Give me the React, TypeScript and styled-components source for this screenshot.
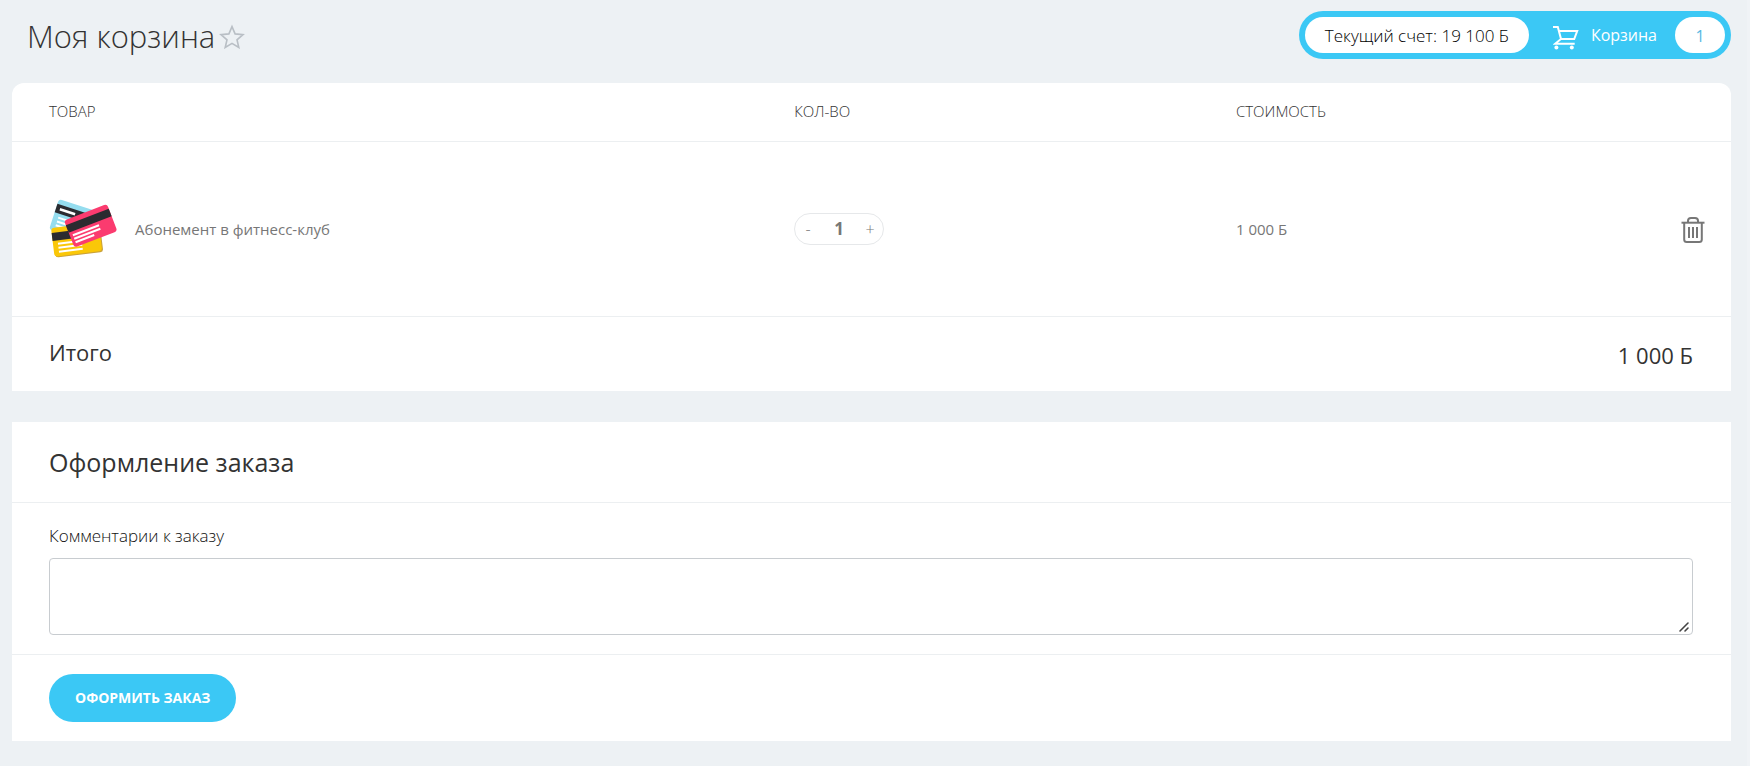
import React, { useState } from "react";
import styled, { createGlobalStyle } from "styled-components";

const GlobalStyle = createGlobalStyle`
  *, *::before, *::after { box-sizing: border-box; }
  body {
    margin: 0;
    background: #edf1f4;
    color: #333;
    font-family: "Open Sans", "Noto Sans", sans-serif;
    font-size: 16px;
  }
  button, input, textarea { font: inherit; color: inherit; }
`;

const Page = styled.div`
  min-height: 100vh;
  padding: 0 16px 25px 12px;
  border-right: 3px solid #f0f3f6;
`;

const Header = styled.header`
  display: flex;
  justify-content: space-between;
  align-items: flex-start;
  padding: 11px 0 22px 15px;
`;

const TitleGroup = styled.div`
  display: flex;
  align-items: center;
  gap: 4px;
`;

const Title = styled.h1`
  margin: 0;
  font-size: 31px;
  line-height: 50px;
  font-weight: 300;
`;

const IconButton = styled.button`
  display: inline-flex;
  padding: 0;
  border: 0;
  background: none;
  vertical-align: middle;
  cursor: pointer;
`;

const AccountBar = styled.div`
  display: flex;
  align-items: center;
  height: 48px;
  padding: 6px;
  border-radius: 24px;
  background: #3bc8f5;
`;

const Balance = styled.span`
  height: 36px;
  padding: 0 20px;
  border-radius: 18px;
  background: #fff;
  color: #000;
  font-size: 17px;
  font-weight: 300;
  line-height: 38px;
`;

const CartLink = styled.a`
  display: flex;
  align-items: center;
  height: 36px;
  margin-left: 24px;
  color: #fff;
  line-height: 38px;
  text-decoration: none;

  svg { margin-right: 12px; }
`;

const CartCount = styled.span`
  min-width: 50px;
  height: 36px;
  margin-left: 18px;
  border-radius: 18px;
  background: #fff;
  color: #55b9e3;
  text-align: center;
`;

const Card = styled.section<{ $rounded?: boolean }>`
  border-radius: ${(p) => (p.$rounded ? "12px 12px 0 0" : "0")};
  background: #fff;

  & + & { margin-top: 31px; }
`;

const CartTable = styled.table`
  width: 100%;
  border-collapse: collapse;
  table-layout: fixed;
`;

const HeadCell = styled.th<{ $width: string }>`
  width: ${(p) => p.$width};
  height: 58px;
  padding: 0 0 2px;
  border-bottom: 1px solid #eceff1;
  font-size: 15px;
  font-weight: 300;
  text-align: left;
  text-transform: uppercase;

  &:first-child { padding-left: 37px; }
`;

const Cell = styled.td<{ $right?: boolean }>`
  height: 175px;
  padding: 0;
  border-bottom: 1px solid #eceff1;
  color: #777;
  font-size: 15px;
  text-align: ${(p) => (p.$right ? "right" : "left")};

  &:first-child { padding-left: 37px; }
  &:last-child { padding-right: 26px; }
`;

const Product = styled.div`
  display: flex;
  align-items: center;
  gap: 18px;
`;

const Stepper = styled.div`
  display: inline-flex;
  align-items: center;
  width: 90px;
  height: 32px;
  border: 1px solid #e6e8ea;
  border-radius: 16px;
  vertical-align: middle;
`;

const StepButton = styled.button`
  width: 26px;
  height: 30px;
  padding: 0;
  border: 0;
  background: none;
  font-size: 16px;
  font-weight: 300;
  cursor: pointer;
`;

const StepInput = styled.input`
  flex: 1;
  min-width: 0;
  height: 30px;
  padding: 0;
  border: 0;
  outline: 0;
  background: none;
  font-size: 17px;
  font-weight: 700;
  text-align: center;
`;

const TotalRow = styled.div`
  display: flex;
  justify-content: space-between;
  height: 74px;
  padding: 0 38px 0 37px;
  font-size: 22px;
  line-height: 70px;
`;

const TotalSum = styled.span`
  line-height: 76px;
`;

const SectionTitle = styled.h2`
  margin: 0;
  padding: 20px 37px;
  border-bottom: 1px solid #eceff1;
  font-size: 25px;
  line-height: 40px;
  font-weight: 400;
`;

const Field = styled.div`
  padding: 20px 38px 19px 37px;
  border-bottom: 1px solid #eceff1;
`;

const Label = styled.label`
  display: block;
  margin-bottom: 10px;
  color: #111;
  font-size: 17px;
  font-weight: 300;
  line-height: 25px;
`;

const resizeGrip = encodeURIComponent(
  '<svg xmlns="http://www.w3.org/2000/svg" width="15" height="15" viewBox="0 0 15 15"><path d="M3 12l8-8M8 12l3-3" stroke="#444" stroke-width="1.6" stroke-linecap="round"/></svg>'
);

const Comment = styled.textarea`
  display: block;
  width: 100%;
  height: 77px;
  padding: 8px;
  border: 1px solid #c8ccd0;
  border-radius: 4px;
  outline: 0;
  resize: vertical;

  &::-webkit-resizer {
    background: url("data:image/svg+xml,${resizeGrip}") center no-repeat;
  }
`;

const Actions = styled.div`
  padding: 19px 37px;
`;

const SubmitButton = styled.button`
  height: 48px;
  padding: 0 26px;
  border: 0;
  border-radius: 24px;
  background: #3bc8f5;
  color: #fff;
  font-size: 14px;
  font-weight: 700;
  text-transform: uppercase;
  cursor: pointer;
`;

const StarIcon = () => (
  <svg width="26" height="26" viewBox="0 -1 26 26" fill="none" stroke="#b9bfc5" strokeWidth="1.6">
    <path d="M13 2.600l3.100 7.300 7.900.7-6 5.200 1.800 7.700-6.800-4.100-6.800 4.100L8 15.800l-6-5.200 7.900-.7z" />
  </svg>
);

const CartIcon = () => (
  <svg width="26" height="30" viewBox="0 -4 26 30" fill="none" stroke="#fff" strokeWidth="2">
    <path d="M0 3h4.800L8 15l-5.800 4.800h19.500" />
    <path d="M5.800 7h18.400l-3 8H8" />
    <circle cx="3.400" cy="23.600" r="2" fill="#fff" stroke="none" />
    <circle cx="18.800" cy="23.600" r="2" fill="#fff" stroke="none" />
  </svg>
);

const TrashIcon = () => (
  <svg width="24" height="28" viewBox="0 0 24 28" fill="none" stroke="#777" strokeWidth="2">
    <path d="M.5 7.700h23" />
    <path d="M7 7.500V5.700Q7 2.900 10 2.900h4q3 0 3 2.800v1.800" />
    <path d="M3.200 7.500v17q0 2.500 2.600 2.500h12.400q2.600 0 2.600-2.500v-17" />
    <path d="M8 12v11M12 12v11M16 12v11" />
  </svg>
);

const CardsImage = () => (
  <svg width="68" height="60" viewBox="-1 1 68 60">
    <g transform="translate(9 1) rotate(18)">
      <rect width="50" height="32" rx="3" fill="#95ddef" />
      <rect y="5" width="50" height="9" fill="#2b2b30" />
      <path d="M4 9.500h16" stroke="#fff" strokeWidth="2.500" />
      <path d="M5 18h22M5 22h22M5 26h22" stroke="#fff" strokeWidth="2" />
    </g>
    <g transform="translate(1 30) rotate(-7)">
      <rect x="1" y="1" width="48" height="29" rx="3" fill="#c9a13a" />
      <rect width="48" height="29" rx="3" fill="#fac708" />
      <path d="M0 5h48v8H0z" fill="#2b2b30" />
      <path d="M5 16.500h24M5 20.500h24M5 24.500h24" stroke="#fff" strokeWidth="2" />
    </g>
    <g transform="translate(14 22.500) rotate(-21)">
      <rect width="46" height="29" rx="3" fill="#fb3b6f" />
      <rect y="5" width="46" height="8" fill="#2b2b30" />
      <path d="M3 17h28M3 20.700h28M3 24.400h20" stroke="#fff" strokeWidth="2" />
    </g>
  </svg>
);

export default function App() {
  const [quantity, setQuantity] = useState(1);
  const total = `${(quantity * 1000).toLocaleString("en-US").replace(/,/g, " ")} Б`;

  return (
    <Page>
      <GlobalStyle />
      <Header>
        <TitleGroup>
          <Title>Моя корзина</Title>
          <IconButton type="button" aria-label="В избранное">
            <StarIcon />
          </IconButton>
        </TitleGroup>
        <AccountBar>
          <Balance>Текущий счет: 19 100 Б</Balance>
          <CartLink href="#cart">
            <CartIcon />
            Корзина
            <CartCount>{quantity}</CartCount>
          </CartLink>
        </AccountBar>
      </Header>
      <main>
        <Card $rounded>
          <CartTable>
            <thead>
              <tr>
                <HeadCell $width="45.5%">Товар</HeadCell>
                <HeadCell $width="25.7%">Кол-во</HeadCell>
                <HeadCell $width="20%">Стоимость</HeadCell>
                <HeadCell $width="auto" aria-label="Действия" />
              </tr>
            </thead>
            <tbody>
              <tr>
                <Cell>
                  <Product>
                    <CardsImage />
                    Абонемент в фитнесс-клуб
                  </Product>
                </Cell>
                <Cell>
                  <Stepper>
                    <StepButton type="button" aria-label="Уменьшить" onClick={() => setQuantity((q) => Math.max(1, q - 1))}>
                      -
                    </StepButton>
                    <StepInput
                      aria-label="Количество"
                      value={quantity}
                      onChange={(e) => setQuantity(Math.max(1, Number(e.target.value) || 1))}
                    />
                    <StepButton type="button" aria-label="Увеличить" onClick={() => setQuantity((q) => q + 1)}>
                      +
                    </StepButton>
                  </Stepper>
                </Cell>
                <Cell>{total}</Cell>
                <Cell $right>
                  <IconButton type="button" aria-label="Удалить">
                    <TrashIcon />
                  </IconButton>
                </Cell>
              </tr>
            </tbody>
          </CartTable>
          <TotalRow>
            <span>Итого</span>
            <TotalSum>{total}</TotalSum>
          </TotalRow>
        </Card>
        <Card>
          <SectionTitle>Оформление заказа</SectionTitle>
          <Field>
            <Label htmlFor="comment">Комментарии к заказу</Label>
            <Comment id="comment" />
          </Field>
          <Actions>
            <SubmitButton type="button">Оформить заказ</SubmitButton>
          </Actions>
        </Card>
      </main>
    </Page>
  );
}
